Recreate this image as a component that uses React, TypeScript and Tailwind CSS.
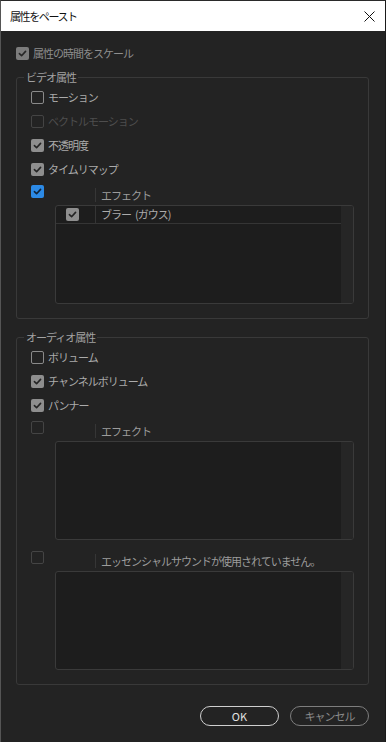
import React from "react";

type BoxState = "on" | "off" | "blue" | "disabled" | "dim";

const Check = ({ color }: { color: string }) => (
  <svg width="9" height="9" viewBox="0 0 10 10" fill="none">
    <path d="M1.6 5.2 L4 7.5 L8.4 2.6" stroke={color} strokeWidth="1.8" strokeLinecap="round" strokeLinejoin="round" />
  </svg>
);

const Box = ({ state }: { state: BoxState }) => {
  if (state === "blue")
    return (
      <div className="w-[13px] h-[13px] rounded-[2px] bg-[#2c8ae6] flex items-center justify-center shrink-0">
        <Check color="#10243a" />
      </div>
    );
  if (state === "on")
    return (
      <div className="w-[13px] h-[13px] rounded-[2px] bg-[#8e8e8e] flex items-center justify-center shrink-0">
        <Check color="#242424" />
      </div>
    );
  if (state === "dim")
    return (
      <div className="w-[13px] h-[13px] rounded-[2px] bg-[#7c7c7c] flex items-center justify-center shrink-0">
        <Check color="#262626" />
      </div>
    );
  if (state === "disabled")
    return <div className="w-[13px] h-[13px] rounded-[2px] border-[1.5px] border-[#444444] shrink-0" />;
  return <div className="w-[13px] h-[13px] rounded-[2px] border-[1.5px] border-[#8a8a8a] shrink-0" />;
};

const Item = ({ state, label }: { state: BoxState; label: string }) => (
  <div className="h-[24px] flex items-center gap-[4px]">
    <Box state={state} />
    <span className={state === "disabled" ? "text-[#4e4e4e]" : "text-[#ababab]"}>{label}</span>
  </div>
);

type Row = { state: BoxState; label: React.ReactNode; key: string };

const ListSection = ({
  state,
  title,
  rows,
  className,
}: {
  state: BoxState;
  title: string;
  rows: Row[];
  className: string;
}) => (
  <div className={`flex items-start gap-[11px] ${className}`}>
    <Box state={state} />
    <div className="flex-1 flex flex-col">
      <div className="h-[20px] flex items-center">
        <div className="w-[40px]" />
        <div className="w-px h-[14px] bg-[#363636]" />
        <span className="pl-[5px] text-[#9c9c9c]">{title}</span>
      </div>
      <div className="h-[99px] flex border border-[#3a3a3a] rounded-[3px] bg-[#1d1d1d] overflow-hidden">
        <div className="flex-1 flex flex-col">
          {rows.map((r) => (
            <div key={r.key} className="h-[18px] flex items-stretch border-b border-[#353535]">
              <div className="w-[40px] pl-[10px] flex items-center border-r border-[#353535]">
                <Box state={r.state} />
              </div>
              <span className="pl-[5px] flex items-center text-[#ababab]">{r.label}</span>
            </div>
          ))}
        </div>
        <div className="w-[12px] bg-[#262626]" />
      </div>
    </div>
  </div>
);

const Group = ({ title, className, children }: { title: string; className: string; children: React.ReactNode }) => (
  <fieldset className={`border border-[#393939] rounded-[3px] ${className}`}>
    <legend className="ml-[7px] px-[2px] leading-[14px] text-[#a2a2a2]">{title}</legend>
    <div className="pl-[14px] pr-[14px] pt-[1px] pb-[14px] flex flex-col">{children}</div>
  </fieldset>
);

export default function App() {
  return (
    <div
      className="w-[386px] h-[742px] bg-[#232323] border-t border-t-[#2a2a2a] border-l border-l-[#555555] border-r border-r-[#1a1a1a] flex flex-col text-[11px] tracking-[-1px] overflow-hidden"
      style={{ fontFamily: '"Noto Sans CJK JP", "Noto Sans", sans-serif' }}
    >
      <div className="h-[30px] bg-white flex items-center justify-between pl-[9px] pr-[10px] shrink-0">
        <span className="text-[11px] text-[#111111] tracking-[-1.4px]">属性をペースト</span>
        <svg width="11" height="11" viewBox="0 0 11 11">
          <path d="M0.5 0.5 L10.5 10.5 M10.5 0.5 L0.5 10.5" stroke="#111111" strokeWidth="1" />
        </svg>
      </div>

      <div className="pl-[15px] pr-[16px] flex flex-col">
        <div className="mt-[15px] h-[14px] flex items-center gap-[4px]">
          <Box state="dim" />
          <span className="text-[#8e8e8e]">属性の時間をスケール</span>
        </div>

        <Group title="ビデオ属性" className="mt-[10px]">
          <Item state="off" label="モーション" />
          <Item state="disabled" label="ベクトルモーション" />
          <Item state="on" label="不透明度" />
          <Item state="on" label="タイムリマップ" />
          <ListSection
            className="mt-[4px]"
            state="blue"
            title="エフェクト"
            rows={[
              {
                key: "blur",
                state: "on",
                label: (
                  <>
                    ブラー<span className="ml-[4px]">(ガウス)</span>
                  </>
                ),
              },
            ]}
          />
        </Group>

        <Group title="オーディオ属性" className="mt-[11px]">
          <Item state="off" label="ボリューム" />
          <Item state="on" label="チャンネルボリューム" />
          <Item state="on" label="パンナー" />
          <ListSection className="mt-[4px]" state="disabled" title="エフェクト" rows={[]} />
          <ListSection
            className="mt-[11px]"
            state="disabled"
            title="エッセンシャルサウンドが使用されていません。"
            rows={[]}
          />
        </Group>

        <div className="mt-[21px] flex justify-end gap-[11px]">
          <button className="w-[79px] h-[20px] rounded-full border-[1.5px] border-[#cfcfcf] text-[#e2e2e2] flex items-center justify-center tracking-normal">
            OK
          </button>
          <button className="w-[79px] h-[20px] rounded-full border-[1.5px] border-[#7e7e7e] text-[#8a8a8a] flex items-center justify-center">
            キャンセル
          </button>
        </div>
      </div>
    </div>
  );
}
